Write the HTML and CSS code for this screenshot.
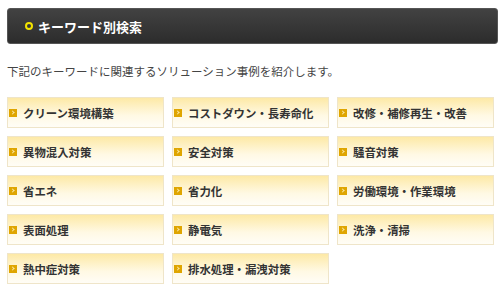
FILE: index.html
```html
<!DOCTYPE html>
<html lang="ja">
<head>
<meta charset="utf-8">
<link rel="stylesheet" href="styles.css">
</head>
<body>
<div class="page">
  <h2 class="head"><span class="ring"></span>キーワード別検索</h2>
  <p class="intro">下記のキーワードに関連するソリューション事例を紹介します。</p>
  <ul class="grid">
    <li class="item"><span class="arw"></span>クリーン環境構築</li>
    <li class="item"><span class="arw"></span>コストダウン・長寿命化</li>
    <li class="item"><span class="arw"></span>改修・補修再生・改善</li>
    <li class="item"><span class="arw"></span>異物混入対策</li>
    <li class="item"><span class="arw"></span>安全対策</li>
    <li class="item"><span class="arw"></span>騒音対策</li>
    <li class="item"><span class="arw"></span>省エネ</li>
    <li class="item"><span class="arw"></span>省力化</li>
    <li class="item"><span class="arw"></span>労働環境・作業環境</li>
    <li class="item"><span class="arw"></span>表面処理</li>
    <li class="item"><span class="arw"></span>静電気</li>
    <li class="item"><span class="arw"></span>洗浄・清掃</li>
    <li class="item"><span class="arw"></span>熱中症対策</li>
    <li class="item"><span class="arw"></span>排水処理・漏洩対策</li>
  </ul>
</div>
</body>
</html>
```

FILE: styles.css
```css
* { box-sizing: border-box; }
html, body { margin: 0; padding: 0; background: #fff; }
body {
  font-family: "Noto Sans CJK JP", "Noto Sans", sans-serif;
  color: #333;
}
.page { padding: 8px 2px 0 7px; }
.head {
  margin: 0;
  height: 36px;
  display: flex;
  align-items: center;
  padding-left: 17px;
  gap: 5px;
  background: linear-gradient(#424242, #2c2c2c);
  border: 1px solid #555;
  border-radius: 3px;
  color: #fff;
  font-size: 13px;
  font-weight: bold;
}
.ring {
  width: 8px;
  height: 8px;
  border: 2px solid #f2e300;
  border-radius: 50%;
}
.intro {
  margin: 19px 0 0 0;
  font-size: 11.5px;
  line-height: 16px;
  color: #444;
}
.grid {
  list-style: none;
  margin: 18px 0 0 0;
  padding: 0;
  display: grid;
  grid-template-columns: 157px 157px 157px;
  column-gap: 8px;
  row-gap: 8px;
}
.item {
  height: 31px;
  display: flex;
  align-items: center;
  gap: 6px;
  padding-left: 1px;
  border: 1px solid #efe5c9;
  background: linear-gradient(#fde9a6, #fff9e4 60%, #fffdf6);
  font-size: 11.4px;
  font-weight: bold;
  color: #333;
}
.arw {
  width: 8px;
  height: 8px;
  background: #dfa500;
  position: relative;
  flex: none;
}
.arw::after {
  content: "";
  position: absolute;
  left: 2px;
  top: 2.5px;
  width: 2px;
  height: 2px;
  border-top: 1px solid #fbe7a0;
  border-right: 1px solid #fbe7a0;
  transform: rotate(45deg);
}
```
